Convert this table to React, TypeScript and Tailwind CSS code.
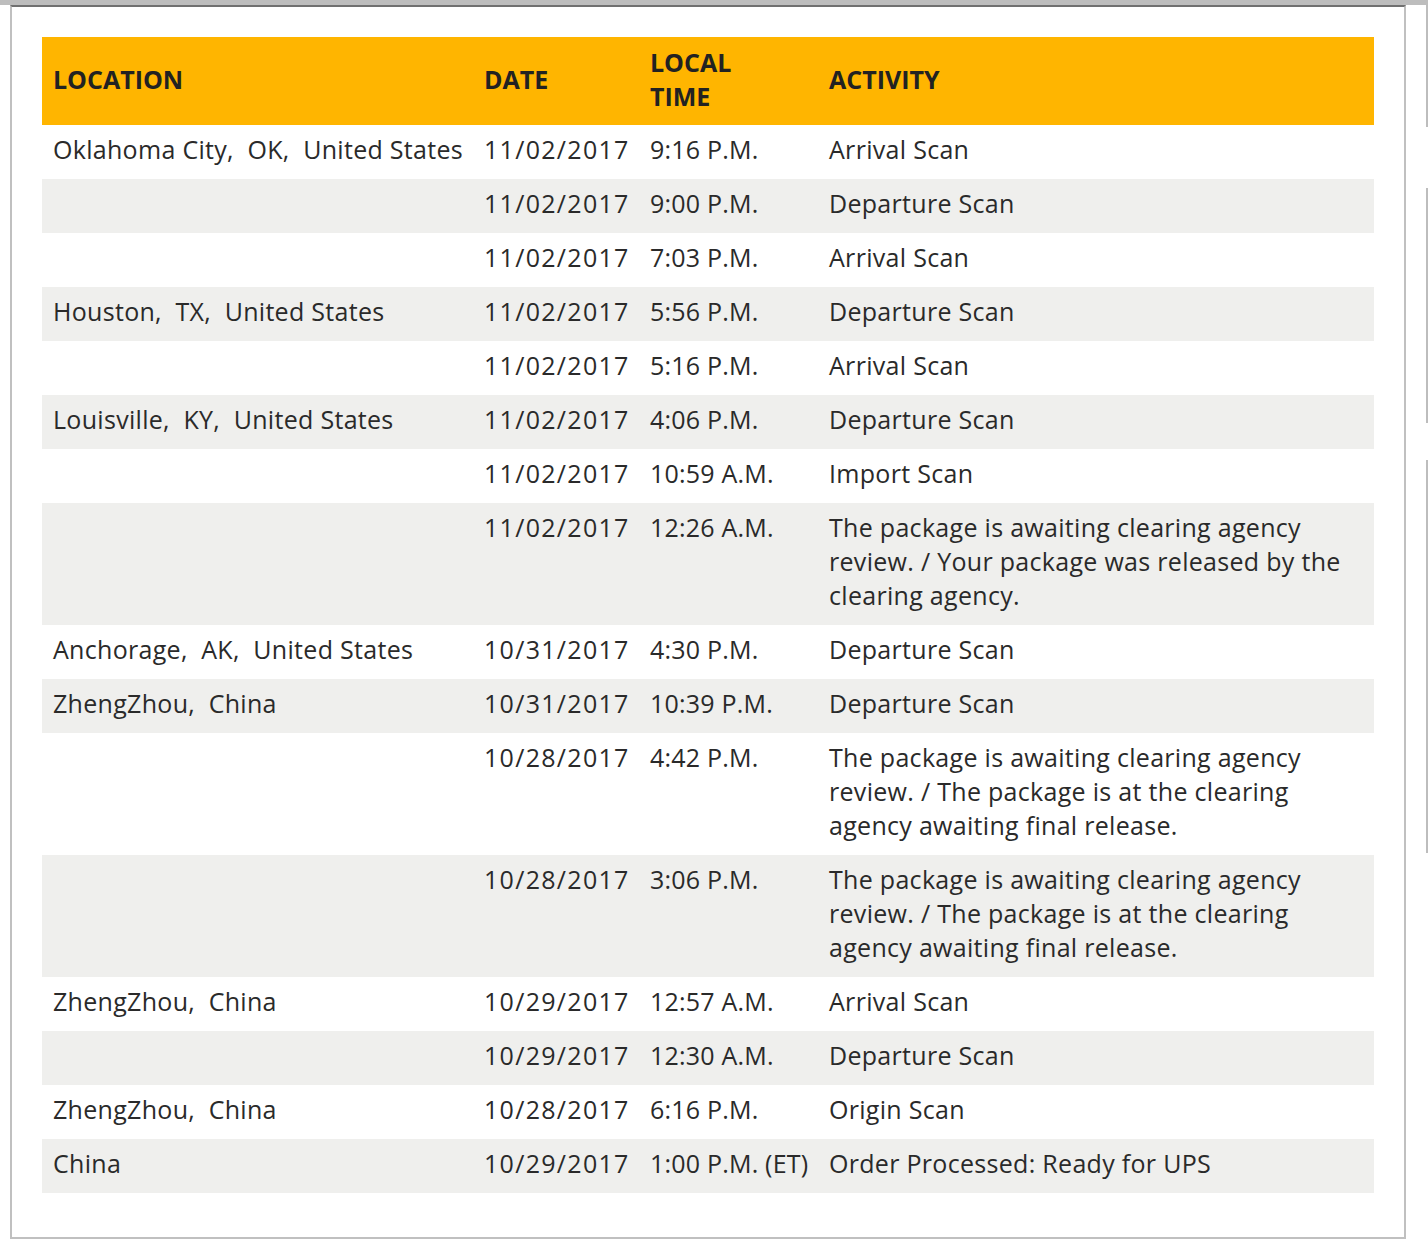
type Row = {
  location?: string;
  date: string;
  time: string;
  activity: string;
};

const rows: Row[] = [
  { location: 'Oklahoma City,\u00a0 OK,\u00a0 United States', date: '11/02/2017', time: '9:16 P.M.', activity: 'Arrival Scan' },
  { date: '11/02/2017', time: '9:00 P.M.', activity: 'Departure Scan' },
  { date: '11/02/2017', time: '7:03 P.M.', activity: 'Arrival Scan' },
  { location: 'Houston,\u00a0 TX,\u00a0 United States', date: '11/02/2017', time: '5:56 P.M.', activity: 'Departure Scan' },
  { date: '11/02/2017', time: '5:16 P.M.', activity: 'Arrival Scan' },
  { location: 'Louisville,\u00a0 KY,\u00a0 United States', date: '11/02/2017', time: '4:06 P.M.', activity: 'Departure Scan' },
  { date: '11/02/2017', time: '10:59 A.M.', activity: 'Import Scan' },
  {
    date: '11/02/2017',
    time: '12:26 A.M.',
    activity: 'The package is awaiting clearing agency review. / Your package was released by the clearing agency.',
  },
  { location: 'Anchorage,\u00a0 AK,\u00a0 United States', date: '10/31/2017', time: '4:30 P.M.', activity: 'Departure Scan' },
  { location: 'ZhengZhou,\u00a0 China', date: '10/31/2017', time: '10:39 P.M.', activity: 'Departure Scan' },
  {
    date: '10/28/2017',
    time: '4:42 P.M.',
    activity: 'The package is awaiting clearing agency review. / The package is at the clearing agency awaiting final release.',
  },
  {
    date: '10/28/2017',
    time: '3:06 P.M.',
    activity: 'The package is awaiting clearing agency review. / The package is at the clearing agency awaiting final release.',
  },
  { location: 'ZhengZhou,\u00a0 China', date: '10/29/2017', time: '12:57 A.M.', activity: 'Arrival Scan' },
  { date: '10/29/2017', time: '12:30 A.M.', activity: 'Departure Scan' },
  { location: 'ZhengZhou,\u00a0 China', date: '10/28/2017', time: '6:16 P.M.', activity: 'Origin Scan' },
  { location: 'China', date: '10/29/2017', time: '1:00 P.M. (ET)', activity: 'Order Processed: Ready for UPS' },
];

export default function App() {
  return (
    <div
      className="w-[1428px] h-[1243px] bg-white overflow-hidden text-[#2a2a2a]"
      style={{ fontFamily: '"Open Sans", "Noto Sans", Arial, sans-serif' }}
    >
      {/* top strip */}
      <div className="h-[5px] bg-[#bdbdbd]" />

      <div className="flex">
        {/* framed panel */}
        <div className="ml-[10px] w-[1396px] h-[1234px] border-2 border-[#c0c0c0] border-t-[#707070] bg-white pt-[30px] px-[30px]">
          <table className="w-[1332px] table-fixed border-collapse text-[25px] leading-[34px]">
            <colgroup>
              <col className="w-[431px]" />
              <col className="w-[166px]" />
              <col className="w-[179px]" />
              <col className="w-[556px]" />
            </colgroup>
            <thead>
              <tr className="bg-[#ffb500] text-[#222] text-left">
                <th className="h-[88px] px-[11px] pt-[8px] pb-[12px] align-middle font-bold">LOCATION</th>
                <th className="px-[11px] pt-[8px] pb-[12px] align-middle font-bold">DATE</th>
                <th className="pl-[11px] pr-[40px] pt-[8px] pb-[12px] align-middle font-bold">LOCAL TIME</th>
                <th className="px-[11px] pt-[8px] pb-[12px] align-middle font-bold">ACTIVITY</th>
              </tr>
            </thead>
            <tbody>
              {rows.map((r, i) => (
                <tr key={i} className={i % 2 === 1 ? 'bg-[#efefed]' : 'bg-white'}>
                  <td className="px-[11px] pt-[7px] pb-[13px] align-top whitespace-nowrap tracking-[0.3px]">
                    {r.location ?? ''}
                  </td>
                  <td className="px-[11px] pt-[7px] pb-[13px] align-top whitespace-nowrap tracking-[1.3px]">{r.date}</td>
                  <td className="px-[11px] pt-[7px] pb-[13px] align-top whitespace-nowrap tracking-[0.2px]">{r.time}</td>
                  <td className="pl-[11px] pr-[8px] pt-[7px] pb-[13px] align-top tracking-[0.3px]">{r.activity}</td>
                </tr>
              ))}
            </tbody>
          </table>
        </div>

        {/* edge of the neighbouring pane */}
        <div className="ml-[20px] w-[2px] flex flex-col">
          <div className="h-[122px] bg-[#bdbdbd]" />
          <div className="h-[61px]" />
          <div className="h-[235px] bg-[#bdbdbd]" />
          <div className="h-[37px]" />
          <div className="h-[393px] bg-[#bdbdbd]" />
        </div>
      </div>
    </div>
  );
}
